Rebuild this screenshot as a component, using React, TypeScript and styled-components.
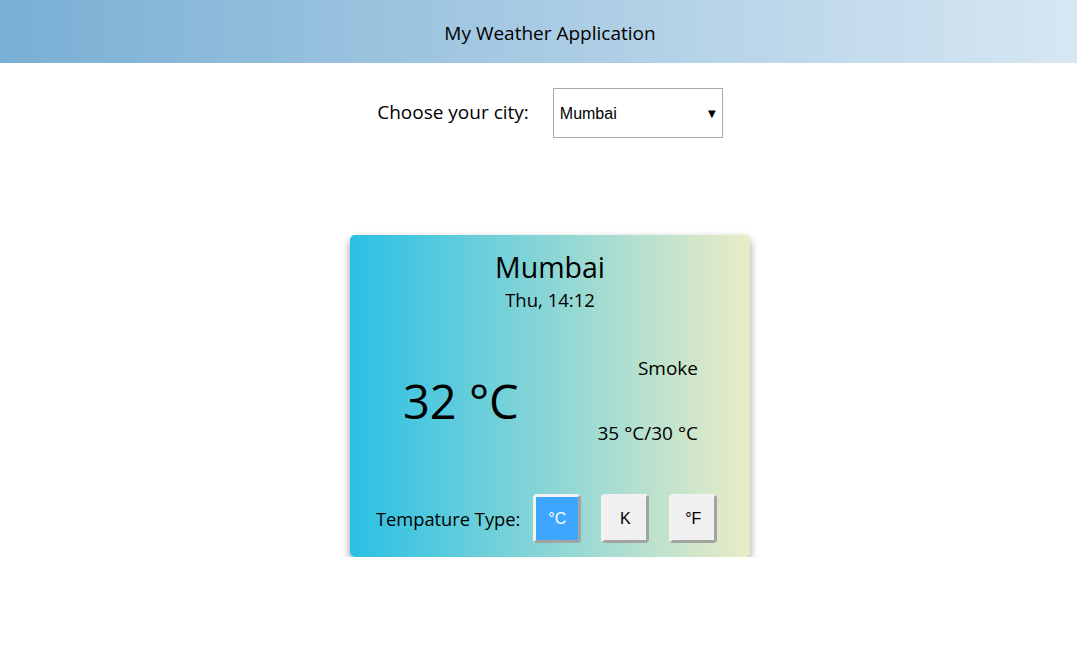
import * as React from 'react';
import {useState} from 'react';
import styled, {createGlobalStyle} from 'styled-components';

type Unit = 'C' | 'K' | 'F';

const GlobalStyle = createGlobalStyle`
  body {
    margin: 0;
    font-family: "Open Sans", "Noto Sans", sans-serif;
    color: #000;
    background: #fff;
  }
  #root {
    width: 1100px;
  }
`;

const Header = styled.header`
  height: 63px;
  box-sizing: border-box;
  padding-top: 2px;
  display: flex;
  align-items: center;
  justify-content: center;
  background: linear-gradient(to right, #79afd4, #d9e8f3);
  font-size: 19px;
`;

const CityRow = styled.div`
  display: flex;
  align-items: center;
  justify-content: center;
  gap: 24px;
  margin-top: 25px;
  font-size: 19px;
`;

const CityLabel = styled.span`
  margin-top: -3px;
`;

const SelectWrap = styled.div`
  position: relative;
  width: 170px;
  height: 50px;
`;

const CitySelect = styled.select`
  appearance: none;
  width: 100%;
  height: 100%;
  box-sizing: border-box;
  border: 1px solid #a9a9a9;
  background: #fff;
  padding: 0 24px 0 6px;
  font-family: "Liberation Sans", Arial, sans-serif;
  font-size: 16px;
  color: #000;
  outline: none;
`;

const Arrow = styled.span`
  position: absolute;
  right: 7px;
  top: 50%;
  transform: translateY(-50%);
  font-family: "DejaVu Sans", sans-serif;
  font-size: 10px;
  pointer-events: none;
`;

const Card = styled.section`
  width: 400px;
  height: 322px;
  box-sizing: border-box;
  margin: 97px auto 0;
  border-radius: 5px;
  background: linear-gradient(to right, #2bc0e4, #eaecc6);
  box-shadow: 0 4px 8px rgba(0, 0, 0, 0.4);
  display: flex;
  flex-direction: column;
`;

const Title = styled.div`
  text-align: center;
  padding-top: 14px;
`;

const CityName = styled.div`
  font-size: 28.5px;
  line-height: 37px;
`;

const DateLine = styled.div`
  font-size: 18.5px;
  line-height: 28px;
`;

const Middle = styled.div`
  display: flex;
  justify-content: space-between;
  align-items: center;
  padding: 0 52px 0 53px;
  margin-top: 41px;
`;

const BigTemp = styled.div`
  font-size: 47px;
`;

const Side = styled.div`
  display: flex;
  flex-direction: column;
  align-items: flex-end;
  gap: 39px;
  font-size: 19px;
`;

const UnitRow = styled.div`
  margin-top: auto;
  display: flex;
  align-items: center;
  padding: 0 0 14px 26px;
  font-size: 18.3px;
`;

const UnitLabel = styled.span`
  margin-right: 13px;
`;

const UnitButton = styled.button<{ $active: boolean }>`
  width: 48px;
  height: 49px;
  margin-right: 20px;
  border: 3px solid;
  border-color: #f2f2f2 #a3a3a3 #a3a3a3 #f2f2f2;
  border-radius: 4px;
  background: ${p => (p.$active ? '#3ea6ff' : '#f0f0f0')};
  color: ${p => (p.$active ? '#fff' : '#000')};
  font-family: "Liberation Sans", Arial, sans-serif;
  font-size: 16px;
  cursor: pointer;
`;

const units: {key: Unit; label: string}[] = [
    {key: 'C', label: '°C'},
    {key: 'K', label: 'K'},
    {key: 'F', label: '°F'},
];

const App = () => {
    const [unit, setUnit] = useState<Unit>('C');
    const [city, setCity] = useState('Mumbai');
    return (
        <>
            <GlobalStyle/>
            <Header>My Weather Application</Header>
            <CityRow>
                <CityLabel>Choose your city:</CityLabel>
                <SelectWrap>
                    <CitySelect value={city} onChange={e => setCity(e.currentTarget.value)}>
                        <option>Mumbai</option>
                        <option>Delhi</option>
                        <option>Chennai</option>
                    </CitySelect>
                    <Arrow>▼</Arrow>
                </SelectWrap>
            </CityRow>
            <Card>
                <Title>
                    <CityName>{city}</CityName>
                    <DateLine>Thu, 14:12</DateLine>
                </Title>
                <Middle>
                    <BigTemp>32 °C</BigTemp>
                    <Side>
                        <span>Smoke</span>
                        <span>35 °C/30 °C</span>
                    </Side>
                </Middle>
                <UnitRow>
                    <UnitLabel>Tempature Type:</UnitLabel>
                    {units.map(u => (
                        <UnitButton key={u.key} $active={unit === u.key} onClick={() => setUnit(u.key)}>
                            {u.label}
                        </UnitButton>
                    ))}
                </UnitRow>
            </Card>
        </>
    );
};

export default App;
